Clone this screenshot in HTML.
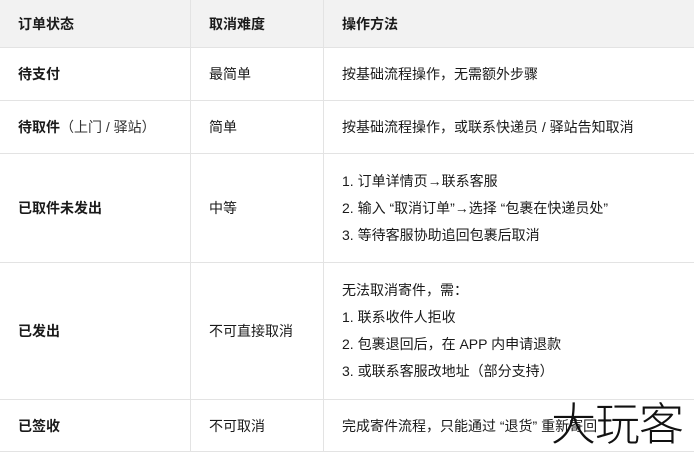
<!DOCTYPE html><html><head><meta charset="utf-8"><style>
body{margin:0;width:694px;height:450px;overflow:hidden;background:#fff;font-family:"Liberation Sans","Noto Sans CJK SC",sans-serif;font-size:14px;color:#1a1a1a;position:relative}
table{border-collapse:collapse;position:absolute;left:-1px;top:-1px;width:696px;table-layout:fixed}
td,th{border:1px solid #e3e3e3;padding:0 0 0 18px;text-align:left;vertical-align:middle}
th{background:#f2f2f2;height:47px;font-weight:bold}
td.b{font-weight:bold}
.s{font-weight:normal;color:#333}
p{margin:0;line-height:27px}
.wm{position:absolute;left:551px;top:391px;font-size:45px;color:#111;font-family:"Noto Sans CJK SC",sans-serif;font-weight:300;letter-spacing:-1px;line-height:60px}
</style></head><body>
<table>
<colgroup><col style="width:191px"><col style="width:133px"><col></colgroup>
<tr><th>订单状态</th><th>取消难度</th><th>操作方法</th></tr>
<tr style="height:53px"><td class="b">待支付</td><td>最简单</td><td>按基础流程操作，无需额外步骤</td></tr>
<tr style="height:53px"><td class="b">待取件<span class="s">（上门 / 驿站）</span></td><td>简单</td><td>按基础流程操作，或联系快递员 / 驿站告知取消</td></tr>
<tr style="height:109px"><td class="b">已取件未发出</td><td>中等</td><td><p>1. 订单详情页→联系客服</p><p>2. 输入 “取消订单”→选择 “包裹在快递员处”</p><p>3. 等待客服协助追回包裹后取消</p></td></tr>
<tr style="height:137px"><td class="b">已发出</td><td>不可直接取消</td><td><p>无法取消寄件，需：</p><p>1. 联系收件人拒收</p><p>2. 包裹退回后，在 APP 内申请退款</p><p>3. 或联系客服改地址（部分支持）</p></td></tr>
<tr style="height:52px"><td class="b">已签收</td><td>不可取消</td><td>完成寄件流程，只能通过 “退货” 重新寄回</td></tr>
</table>
<div class="wm">大玩客</div>
</body></html>
